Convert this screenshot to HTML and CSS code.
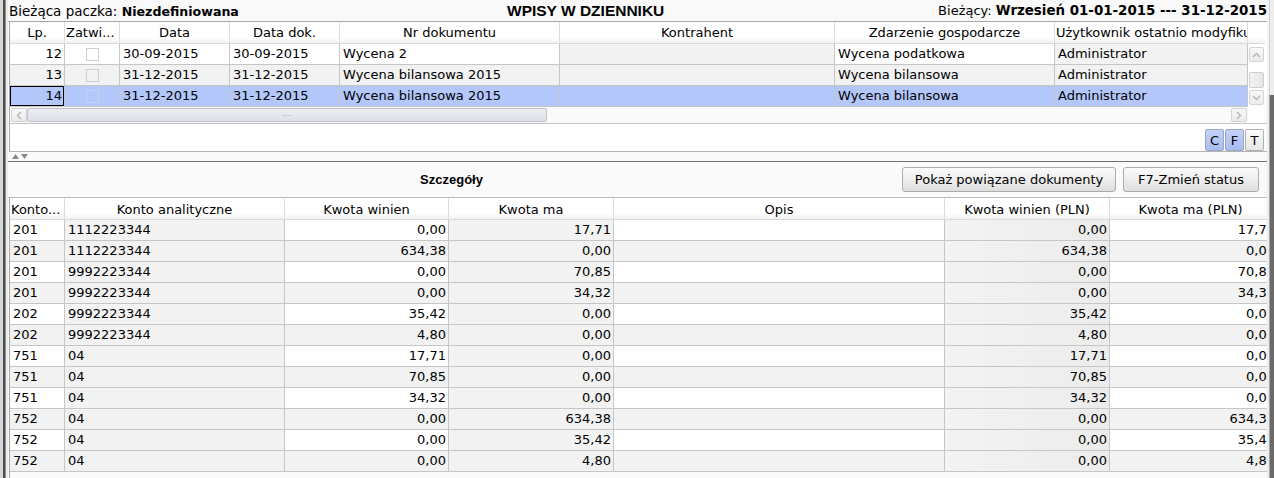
FILE: index.html
```html
<!DOCTYPE html>
<html lang="pl">
<head>
<meta charset="utf-8">
<title>Wpisy w dzienniku</title>
<link rel="stylesheet" href="styles.css">
</head>
<body>
<div class="window">
  <div class="frame-left"></div>
  <div class="main">
    <div class="topbar">
      <div class="tb-left">Bieżąca paczka: <b>Niezdefiniowana</b></div>
      <div class="tb-title">WPISY W DZIENNIKU</div>
      <div class="tb-right">Bieżący: <b>Wrzesień 01-01-2015 --- 31-12-2015</b></div>
    </div>

    <div class="upper">
      <div class="ugrid">
        <div class="hc">Lp.</div>
        <div class="hc hl">Zatwi...</div>
        <div class="hc">Data</div>
        <div class="hc">Data dok.</div>
        <div class="hc">Nr dokumentu</div>
        <div class="hc">Kontrahent</div>
        <div class="hc">Zdarzenie gospodarcze</div>
        <div class="hc hl">Użytkownik ostatnio modyfikujący</div>
        <div class="hc hblank"></div>

        <div class="vscroll">
          <div class="sbtn vbtn"><svg width="9" height="6" viewBox="0 0 9 6"><path d="M1 5 L4.5 1.5 L8 5" fill="none" stroke="#b4b4b4" stroke-width="1.4"/></svg></div>
          <div class="vthumb"></div>
          <div class="sbtn vbtn vdown"><svg width="9" height="6" viewBox="0 0 9 6"><path d="M1 1 L4.5 4.5 L8 1" fill="none" stroke="#b4b4b4" stroke-width="1.4"/></svg></div>
        </div>

        <div class="row w">
          <div class="c r">12</div>
          <div class="c chk"><span class="box"></span></div>
          <div class="c">30-09-2015</div>
          <div class="c">30-09-2015</div>
          <div class="c">Wycena 2</div>
          <div class="c g"></div>
          <div class="c">Wycena podatkowa</div>
          <div class="c g">Administrator</div>
        </div>
        <div class="row alt">
          <div class="c r">13</div>
          <div class="c chk"><span class="box"></span></div>
          <div class="c">31-12-2015</div>
          <div class="c">31-12-2015</div>
          <div class="c">Wycena bilansowa 2015</div>
          <div class="c"></div>
          <div class="c">Wycena bilansowa</div>
          <div class="c">Administrator</div>
        </div>
        <div class="row sel">
          <div class="c r focus">14</div>
          <div class="c chk"><span class="box"></span></div>
          <div class="c">31-12-2015</div>
          <div class="c">31-12-2015</div>
          <div class="c">Wycena bilansowa 2015</div>
          <div class="c"></div>
          <div class="c">Wycena bilansowa</div>
          <div class="c">Administrator</div>
        </div>

        <div class="hscroll">
          <div class="sbtn hbtn"><svg width="6" height="9" viewBox="0 0 6 9"><path d="M5 1 L1.5 4.5 L5 8" fill="none" stroke="#b4b4b4" stroke-width="1.4"/></svg></div>
          <div class="hthumb"><span class="grip"></span></div>
          <div class="htrack"></div>
          <div class="sbtn hbtn"><svg width="6" height="9" viewBox="0 0 6 9"><path d="M1 1 L4.5 4.5 L1 8" fill="none" stroke="#b4b4b4" stroke-width="1.4"/></svg></div>
        </div>
        <div class="corner"></div>
      </div>
      <div class="filter-row">
        <div class="cft">
          <div class="tbtn on">C</div>
          <div class="tbtn on">F</div>
          <div class="tbtn">T</div>
        </div>
      </div>
    </div>

    <div class="splitter">
      <svg width="7" height="5" viewBox="0 0 7 5"><path d="M0 5 L3.5 0 L7 5 Z" fill="#8a8a8a"/></svg>
      <svg width="7" height="5" viewBox="0 0 7 5"><path d="M0 0 L3.5 5 L7 0 Z" fill="#8a8a8a"/></svg>
    </div>

    <div class="details">
      <div class="det-title">Szczegóły</div>
      <div class="btn b1">Pokaż powiązane dokumenty</div>
      <div class="btn b2">F7-Zmień status</div>
    </div>

    <div class="lower">
      <div class="lgrid">
        <div class="hc hl">Konto...</div>
        <div class="hc">Konto analityczne</div>
        <div class="hc">Kwota winien</div>
        <div class="hc">Kwota ma</div>
        <div class="hc">Opis</div>
        <div class="hc">Kwota winien (PLN)</div>
        <div class="hc hlast">Kwota ma (PLN)</div>

        <div class="row w"><div class="c">201</div><div class="c g">1112223344</div><div class="c r">0,00</div><div class="c r g">17,71</div><div class="c"></div><div class="c r pln">0,00</div><div class="c r">17,71</div></div>
        <div class="row alt"><div class="c">201</div><div class="c g">1112223344</div><div class="c r">634,38</div><div class="c r g">0,00</div><div class="c"></div><div class="c r pln">634,38</div><div class="c r">0,00</div></div>
        <div class="row w"><div class="c">201</div><div class="c g">9992223344</div><div class="c r">0,00</div><div class="c r g">70,85</div><div class="c"></div><div class="c r pln">0,00</div><div class="c r">70,85</div></div>
        <div class="row alt"><div class="c">201</div><div class="c g">9992223344</div><div class="c r">0,00</div><div class="c r g">34,32</div><div class="c"></div><div class="c r pln">0,00</div><div class="c r">34,32</div></div>
        <div class="row w"><div class="c">202</div><div class="c g">9992223344</div><div class="c r">35,42</div><div class="c r g">0,00</div><div class="c"></div><div class="c r pln">35,42</div><div class="c r">0,00</div></div>
        <div class="row alt"><div class="c">202</div><div class="c g">9992223344</div><div class="c r">4,80</div><div class="c r g">0,00</div><div class="c"></div><div class="c r pln">4,80</div><div class="c r">0,00</div></div>
        <div class="row w"><div class="c">751</div><div class="c g">04</div><div class="c r">17,71</div><div class="c r g">0,00</div><div class="c"></div><div class="c r pln">17,71</div><div class="c r">0,00</div></div>
        <div class="row alt"><div class="c">751</div><div class="c g">04</div><div class="c r">70,85</div><div class="c r g">0,00</div><div class="c"></div><div class="c r pln">70,85</div><div class="c r">0,00</div></div>
        <div class="row w"><div class="c">751</div><div class="c g">04</div><div class="c r">34,32</div><div class="c r g">0,00</div><div class="c"></div><div class="c r pln">34,32</div><div class="c r">0,00</div></div>
        <div class="row alt"><div class="c">752</div><div class="c g">04</div><div class="c r">0,00</div><div class="c r g">634,38</div><div class="c"></div><div class="c r pln">0,00</div><div class="c r">634,38</div></div>
        <div class="row w"><div class="c">752</div><div class="c g">04</div><div class="c r">0,00</div><div class="c r g">35,42</div><div class="c"></div><div class="c r pln">0,00</div><div class="c r">35,42</div></div>
        <div class="row alt"><div class="c">752</div><div class="c g">04</div><div class="c r">0,00</div><div class="c r g">4,80</div><div class="c"></div><div class="c r pln">0,00</div><div class="c r">4,80</div></div>
      </div>
    </div>
  </div>
  <div class="frame-right">
    <div class="fr-top"></div>
    <div class="fr-bottom"></div>
  </div>
</div>
</body>
</html>
```

FILE: styles.css
```css
* { box-sizing: border-box; }
html, body { margin: 0; padding: 0; }
body {
  width: 1274px;
  height: 478px;
  overflow: hidden;
  background: #f0f0f0;
  font-family: "DejaVu Sans", "Noto Sans", sans-serif;
  font-size: 13px;
  color: #000;
}

.window { display: flex; height: 478px; }

.frame-left {
  width: 8px;
  background: linear-gradient(to right, #d6d6d6 0 3px, #4e4e4e 3px 5px, #8e8e8e 5px 6px, #ececec 6px 8px);
}
.frame-right { width: 7px; display: flex; flex-direction: column; }
.fr-top { height: 95px; background: linear-gradient(to right, #f4f4f4 0 2px, #cfcfcf 2px 3px, #ededed 3px); }
.fr-bottom { flex: 1; background: linear-gradient(to right, #ededed 0 2px, #a8a8a8 2px 3px, #6a6a6a 3px); }

.main {
  flex: 1;
  min-width: 0;
  display: flex;
  flex-direction: column;
  background: #fafafa;
}

/* top bar */
.topbar {
  height: 22px;
  flex: none;
  display: flex;
  align-items: center;
  white-space: nowrap;
  font-size: 13.5px;
  border-bottom: 1px solid #a8a8a8;
  background: #f9f9f9;
}
.tb-left { width: 499px; padding-left: 1px; }
.tb-left b { font-size: 12.6px; }
.tb-title { font-family: "Liberation Sans", Arial, sans-serif; font-weight: bold; font-size: 15.5px; }
.tb-right { margin-left: auto; font-size: 13px; }
.tb-right b { font-size: 13.4px; }

/* upper grid */
.upper {
  flex: none;
  margin-left: 1px;
  border-left: 1px solid #a8a8a8;
  border-bottom: 1px solid #b4b4b4;
  background: #fff;
  overflow: hidden;
}
.ugrid {
  display: grid;
  grid-template-columns: 55px 55px 110px 110px 220px 275px 220px 193px 17px;
  grid-template-rows: 22px 21px 21px 21px 16px;
}
.row { display: contents; }

.hc {
  padding-top: 1px;
  line-height: 20px;
  text-align: center;
  white-space: nowrap;
  overflow: hidden;
  background: linear-gradient(#ffffff, #ffffff 75%, #f1f1f1);
  border-bottom: 1px solid #d9d9d9;
  border-right: 1px solid #dcdcdc;
}
.hc.hl { text-align: left; padding-left: 1px; }
.hc.hblank { border-right: none; }
.hc.hlast { padding-right: 6px; }

.c {
  line-height: 20px;
  padding: 0 3px;
  white-space: nowrap;
  overflow: hidden;
  border-right: 1px solid #c6c6c6;
  border-bottom: 1px solid #c6c6c6;
  background: #fff;
}
.c.r { text-align: right; padding-right: 2px; }
.row.w > .c.g { background: #f3f3f3; }
.row.alt > .c { background: #f2f2f2; }
.row.sel > .c { background: #b4c7fa; }
.c.focus { box-shadow: inset 0 0 0 1px #000; }

.chk { display: flex; align-items: center; justify-content: center; }
.box { width: 13px; height: 13px; border: 1px solid #cfcfcf; background: transparent; }
.row.sel .box { border-color: #c9d3ee; }

.vscroll {
  grid-column: 9;
  grid-row: 2 / span 3;
  display: flex;
  flex-direction: column;
  padding: 3px 1px 0 1px;
  background: #fff;
}
.sbtn {
  display: flex;
  align-items: center;
  justify-content: center;
  border: 1px solid #d4d4d4;
  border-radius: 2px;
  background: linear-gradient(#f8f8f8, #ebebeb);
}
.vbtn { width: 15px; height: 15px; flex: none; }
.vthumb {
  margin-top: 10px;
  height: 16px;
  width: 15px;
  border: 1px solid #cfcfcf;
  border-radius: 2px;
  background: linear-gradient(to right, #f4f4f4, #e4e4e4);
}
.vdown { margin-top: 2px; }

.hscroll {
  grid-column: 1 / span 8;
  display: flex;
  align-items: center;
  padding: 0 1px;
  background: #fafafa;
}
.hbtn { width: 16px; height: 14px; flex: none; }
.hthumb {
  width: 520px;
  height: 14px;
  flex: none;
  border: 1px solid #bfc3cc;
  border-radius: 2px;
  background: linear-gradient(#eceef2, #dde0e6);
  display: flex;
  align-items: center;
  justify-content: center;
}
.grip { width: 8px; height: 1px; border-top: 1px dotted #b8bcc4; }
.htrack { flex: 1; }
.corner { background: #fff; }

.filter-row {
  height: 28px;
  border-top: 1px solid #c4c4c4;
  display: flex;
  justify-content: flex-end;
  align-items: flex-end;
  padding-right: 3px;
  background: #fff;
}
.cft { display: flex; gap: 1px; }
.tbtn {
  width: 19px;
  height: 22px;
  line-height: 21px;
  text-align: center;
  border: 1px solid #b0b0b0;
  border-radius: 2px;
  background: linear-gradient(#fbfbfb, #e6e6e6);
}
.tbtn.on { background: linear-gradient(#c3d2f8, #a9bcef); border-color: #9aa8c8; }

/* splitter */
.splitter {
  height: 10px;
  flex: none;
  display: flex;
  align-items: center;
  gap: 2px;
  padding-left: 4px;
  border-bottom: 1px solid #707070;
  background: #fafafa;
}

/* details bar */
.details {
  height: 36px;
  flex: none;
  display: flex;
  align-items: center;
  gap: 7px;
  padding-right: 8px;
  border-bottom: 1px solid #bdbdbd;
  background: #fafafa;
}
.det-title {
  flex: 1;
  text-align: center;
  font-family: "Liberation Sans", Arial, sans-serif;
  font-weight: bold;
  font-size: 13px;
}
.btn {
  height: 25px;
  line-height: 23px;
  text-align: center;
  border: 1px solid #acacac;
  border-radius: 3px;
  background: linear-gradient(#fbfbfb, #eeeeee 50%, #dedede);
  white-space: nowrap;
}
.b1 { width: 214px; }
.b2 { width: 136px; }

/* lower grid */
.lower {
  flex: 1;
  min-height: 0;
  margin-left: 1px;
  border-left: 1px solid #a8a8a8;
  background: #fafafa;
  overflow: hidden;
}
.lgrid {
  display: grid;
  width: 1268px;
  grid-template-columns: 55px 220px 164px 165px 331px 165px 168px;
  grid-template-rows: 22px;
  grid-auto-rows: 21px;
}
.lgrid .hc { padding-top: 2px; line-height: 19px; }
.c.pln { background: linear-gradient(to right, #f3f3f3, #ececec) !important; }
```
